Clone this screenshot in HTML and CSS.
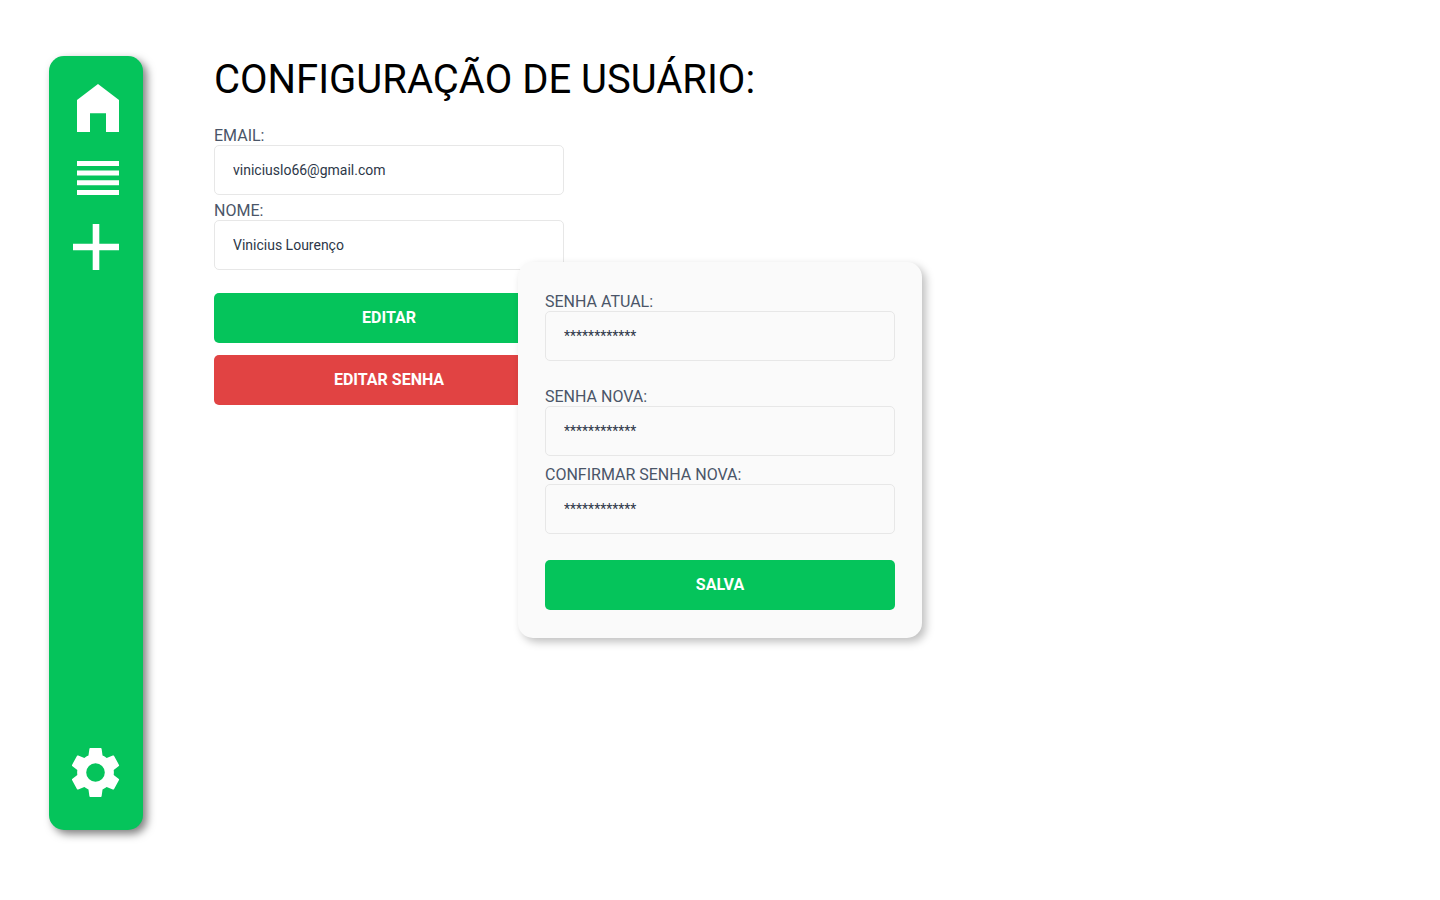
FILE: index.html
```html
<!DOCTYPE html>
<html lang="pt-BR">
<head>
<meta charset="utf-8">
<meta name="viewport" content="width=device-width, initial-scale=1">
<title>Configuração de usuário</title>
<link rel="stylesheet" href="styles.css">
</head>
<body>
<div class="page">
  <nav class="sidebar" aria-label="Menu">
    <a class="nav-link" href="#" aria-label="Início">
      <svg width="48" height="48" viewBox="0 0 48 48" fill="#fff"><path d="M26 0 47 16V48H34V29.3H18V48H5V16Z"/></svg>
    </a>
    <a class="nav-link" href="#" aria-label="Lista">
      <svg width="48" height="34" viewBox="0 0 48 34" fill="#fff"><path d="M5 0H47V5H5ZM5 9.6H47V14.4H5ZM5 19.3H47V24.2H5ZM5 29H47V34H5Z"/></svg>
    </a>
    <a class="nav-link" href="#" aria-label="Adicionar">
      <svg width="48" height="46" viewBox="0 0 48 46" fill="#fff"><path d="M20.7 0H27.3V19.7H47V26.3H27.3V46H20.7V26.3H1V19.7H20.7Z"/></svg>
    </a>
    <a class="nav-link nav-settings" href="#" aria-label="Configurações">
      <svg width="48" height="49" viewBox="2.4 2 19.6 20" fill="#fff"><path d="M19.43 12.98c.04-.32.07-.64.07-.98s-.03-.66-.07-.98l2.11-1.65c.12-.15.14-.32.05-.48l-2.05-3.7c-.1-.16-.3-.2-.49-.14l-2.49 1c-.52-.4-1.08-.73-1.69-.98l-.38-2.75C14.46 2.1 14.35 2 14.1 2H9.9c-.25 0-.36.1-.39.32l-.38 2.75c-.61.25-1.17.59-1.69.98l-2.49-1c-.19-.06-.39-.02-.49.14l-2.05 3.7c-.09.16-.07.33.05.48l2.11 1.65c-.04.32-.07.65-.07.98s.03.66.07.98l-2.11 1.65c-.12.15-.14.32-.05.48l2.05 3.7c.1.16.3.2.49.14l2.49-1c.52.4 1.08.73 1.69.98l.38 2.75c.03.22.14.32.39.32h4.2c.25 0 .36-.1.39-.32l.38-2.75c.61-.25 1.17-.59 1.69-.98l2.49 1c.19.06.39.02.49-.14l2.05-3.7c.09-.16.07-.33-.05-.48l-2.11-1.65zM12 15.8A3.8 3.8 0 1 1 12 8.2a3.8 3.8 0 0 1 0 7.6z"/></svg>
    </a>
  </nav>

  <main class="content">
    <h1 class="title">CONFIGURAÇÃO DE USUÁRIO:</h1>
    <form class="user-form">
      <div class="field">
        <label class="label" for="email">EMAIL:</label>
        <input class="input" id="email" type="email" value="viniciuslo66@gmail.com">
      </div>
      <div class="field">
        <label class="label" for="nome">NOME:</label>
        <input class="input" id="nome" type="text" value="Vinicius Lourenço">
      </div>
      <div class="actions">
        <button class="button" type="button">EDITAR</button>
        <button class="button button-danger" type="button">EDITAR SENHA</button>
      </div>
    </form>
  </main>
</div>

<div class="overlay">
  <form class="modal" role="dialog" aria-label="Editar senha">
    <div class="field">
      <label class="label" for="senha-atual">SENHA ATUAL:</label>
      <input class="input" id="senha-atual" type="text" value="************">
    </div>
    <div class="new-password">
      <div class="field">
        <label class="label" for="senha-nova">SENHA NOVA:</label>
        <input class="input" id="senha-nova" type="text" value="************">
      </div>
      <div class="field">
        <label class="label" for="senha-confirmar">CONFIRMAR SENHA NOVA:</label>
        <input class="input" id="senha-confirmar" type="text" value="************">
      </div>
    </div>
    <button class="button" type="button">SALVA</button>
  </form>
</div>
</body>
</html>
```

FILE: styles.css
```css
* {
  box-sizing: border-box;
}

body {
  margin: 0;
  background: #fff;
  font-family: Roboto, "Liberation Sans", sans-serif;
}

.page {
  display: flex;
  gap: 71px;
  min-height: 100vh;
  padding: 56px 49px 70px;
}

.sidebar {
  display: flex;
  flex: none;
  flex-direction: column;
  align-items: center;
  gap: 29px;
  width: 94px;
  padding: 28px 0 33px;
  border-radius: 15px;
  background: #05c45b;
  box-shadow: 4px 4px 8px rgba(0, 0, 0, 0.5);
}

.nav-link,
.nav-link svg {
  display: block;
}

.nav-settings {
  margin-top: auto;
}

.content {
  flex: 1;
}

.title {
  margin: 0 0 23px;
  color: #000;
  font-size: 40px;
  font-weight: 400;
  line-height: 48px;
}

.user-form {
  display: flex;
  flex-direction: column;
  gap: 7px;
  max-width: 350px;
}

.field {
  display: flex;
  flex-direction: column;
}

.label {
  color: #4a5568;
  font-size: 16px;
  line-height: 18px;
}

.input {
  width: 100%;
  height: 50px;
  padding: 0 18px;
  border: 1px solid #e7e7e7;
  border-radius: 5px;
  outline: 0;
  background: transparent;
  color: #2d3748;
  font-family: inherit;
  font-size: 14px;
}

.actions {
  display: flex;
  flex-direction: column;
  gap: 12px;
  margin-top: 16px;
}

.button {
  width: 100%;
  height: 50px;
  padding: 0 0 2px;
  border: 0;
  border-radius: 5px;
  background: #05c45b;
  color: #fff;
  font-family: inherit;
  font-size: 16px;
  font-weight: 700;
  cursor: pointer;
}

.button-danger {
  background: #e14343;
}

.overlay {
  position: absolute;
  inset: 0;
  display: flex;
  align-items: center;
  justify-content: center;
}

.modal {
  display: flex;
  flex-direction: column;
  gap: 26px;
  width: 404px;
  max-width: 100%;
  padding: 31px 27px 28px;
  border-radius: 15px;
  background: #fafafa;
  box-shadow: 4px 4px 8px rgba(0, 0, 0, 0.25);
}

.new-password {
  display: flex;
  flex-direction: column;
  gap: 10px;
  padding-top: 1px;
}
```
